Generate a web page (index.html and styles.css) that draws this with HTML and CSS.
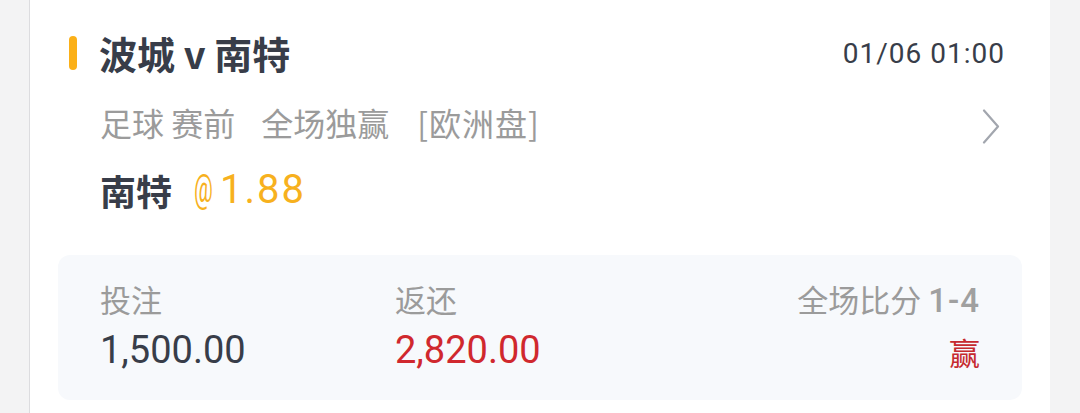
FILE: index.html
```html
<!DOCTYPE html>
<html lang="zh-CN">
<head>
  <meta charset="UTF-8">
  <meta name="viewport" content="width=device-width, initial-scale=1.0">
  <title>注单详情</title>
  <link rel="stylesheet" href="styles.css">
</head>
<body>
  <div class="page">
    <div class="bet-card">
      <div class="bet-head">
        <div class="match">
          <span class="match-bar"></span>
          <span class="match-name">波城 v 南特</span>
        </div>
        <span class="match-time">01/06 01:00</span>
      </div>
      <div class="bet-market">
        <div class="market-text">
          <span>足球 赛前</span>
          <span class="market-type">全场独赢</span>
          <span class="market-line">[欧洲盘]</span>
        </div>
        <svg class="chevron" width="20" height="36" viewBox="0 0 20 36">
          <path d="M3 1.5 L17 17.5 L3 33.5" fill="none" stroke="#a2a6ae" stroke-width="2.2" stroke-linecap="round" stroke-linejoin="round"/>
        </svg>
      </div>
      <div class="bet-pick">
        <span class="pick-name">南特</span>
        <span class="pick-odds"><span class="odds-at">@</span>1.88</span>
      </div>
      <div class="bet-summary">
        <div class="summary-col">
          <span class="summary-label">投注</span>
          <span class="summary-value">1,500.00</span>
        </div>
        <div class="summary-col">
          <span class="summary-label">返还</span>
          <span class="summary-value win-amount">2,820.00</span>
        </div>
        <div class="summary-col summary-result">
          <span class="summary-label">全场比分 <span class="score">1-4</span></span>
          <span class="result-tag">赢</span>
        </div>
      </div>
    </div>
  </div>
</body>
</html>
```

FILE: styles.css
```css
body {
  margin: 0;
  padding: 0;
  background: #f3f3f4;
  font-family: Roboto, "Noto Sans CJK SC", "Noto Sans", sans-serif;
  color: #383d49;
}
.page {
  display: flex;
  padding: 0 30px 0 29px;
  height: 413px;
  overflow: hidden;
}
.bet-card {
  flex: 1;
  background: #fff;
  border-left: 1px solid #dcdcdf;
  padding: 27px 28px 0 28px;
}
.bet-head {
  display: flex;
  justify-content: space-between;
  align-items: center;
  padding: 0 17px 0 11px;
  height: 52px;
}
.match {
  display: flex;
  align-items: center;
  gap: 22px;
}
.match-bar {
  width: 8px;
  height: 34px;
  border-radius: 4px;
  background: #fbb018;
}
.match-name {
  font-size: 38px;
  font-weight: 700;
  color: #383d49;
  font-family: "Noto Sans CJK SC", sans-serif;
  line-height: 52px;
}
.match-time {
  font-size: 28px;
  letter-spacing: 1px;
  color: #383d49;
}
.bet-market {
  display: flex;
  justify-content: space-between;
  align-items: center;
  padding: 0 21px 0 42px;
  margin-top: 17px;
  height: 52px;
}
.market-text {
  display: flex;
  font-size: 32px;
  color: #9b9b9b;
  font-family: "Noto Sans CJK SC", sans-serif;
  line-height: 52px;
}
.market-type {
  margin-left: 26px;
}
.market-line {
  margin-left: 28px;
  letter-spacing: 1px;
}
.chevron {
  display: block;
  margin-top: 10px;
}
.bet-pick {
  display: flex;
  align-items: center;
  gap: 22px;
  padding-left: 42px;
  margin-top: 15px;
  height: 54px;
}
.pick-name {
  font-size: 36px;
  font-weight: 700;
  font-family: "Noto Sans CJK SC", sans-serif;
  line-height: 54px;
}
.pick-odds {
  display: flex;
  align-items: center;
  font-size: 40px;
  letter-spacing: 2px;
  color: #f7b11e;
  line-height: 54px;
}
.odds-at {
  display: inline-block;
  width: 26px;
  font-size: 38px;
  letter-spacing: 0;
  transform: scaleX(0.55) translateY(-1px);
  transform-origin: left center;
}
.bet-summary {
  display: grid;
  grid-template-columns: 295px 1fr auto;
  margin-top: 38px;
  padding: 23px 42px 26px 42px;
  background: #f7f9fc;
  border-radius: 12px;
}
.summary-col {
  display: flex;
  flex-direction: column;
  gap: 8px;
}
.summary-label {
  font-size: 31px;
  color: #9b9b9b;
  font-family: "Noto Sans CJK SC", sans-serif;
  line-height: 42px;
}
.score {
  font-family: Roboto, sans-serif;
  font-size: 33px;
  font-weight: 500;
  letter-spacing: 1px;
  color: #a0a0a0;
}
.summary-value {
  font-size: 38px;
  color: #383d49;
  line-height: 44px;
}
.win-amount {
  color: #d0282e;
}
.summary-result {
  align-items: flex-end;
}
.result-tag {
  font-size: 31px;
  color: #c62a2f;
  line-height: 44px;
  font-family: "Noto Sans CJK SC", sans-serif;
}
```
